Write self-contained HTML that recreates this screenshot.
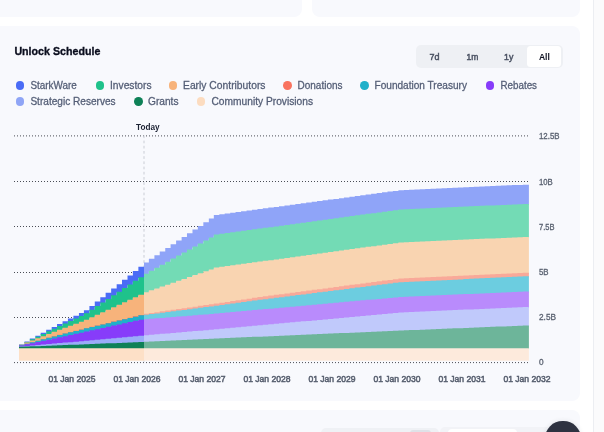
<!DOCTYPE html>
<html lang="en">
<head>
<meta charset="utf-8">
<title>Unlock Schedule</title>
<style>
html,body{margin:0;padding:0;}
body{width:604px;height:432px;overflow:hidden;background:#ffffff;position:relative;
font-family:"Liberation Sans",sans-serif;}
.card{position:absolute;background:#f8f9fd;}
#c1{left:0;top:-20px;width:301.5px;height:36.5px;border-radius:0 0 8px 0;}
#c2{left:311.5px;top:-20px;width:268.5px;height:36.5px;border-radius:0 0 8px 8px;}
#main{left:0;top:25.8px;width:580px;height:375.4px;border-radius:0 8px 8px 0;}
#c4{left:0;top:410px;width:580px;height:40px;border-radius:0 8px 0 0;}
#rail{position:absolute;left:593px;top:0;width:11px;height:432px;background:#fbfbfc;border-left:1px solid #eceef2;box-sizing:border-box;}
#seg{position:absolute;left:416px;top:44.6px;width:146.6px;height:23.1px;background:#eef0f4;border-radius:5px;}
#segon{position:absolute;left:526.7px;top:45.8px;width:34.8px;height:21.4px;background:#ffffff;border-radius:3.5px;}
.dot{position:absolute;width:8.8px;height:8.8px;border-radius:50%;display:block;}
#chart{position:absolute;left:0;top:0;will-change:transform;}
#fab{position:absolute;left:545.2px;top:420.9px;width:35.4px;height:35.4px;border-radius:50%;background:#2e3241;box-shadow:0 0 5px rgba(40,45,60,0.10);}
#b0{position:absolute;left:440px;top:427.3px;width:122px;height:10px;background:#f2f3f7;border-radius:5px 5px 0 0;}
#b1{position:absolute;left:320.5px;top:428.3px;width:118px;height:10px;background:#eff1f5;border-radius:5px 5px 0 0;}
#b1k{position:absolute;left:410px;top:430.4px;width:21px;height:6px;background:#dfe2e8;border-radius:3px 3px 0 0;}
#b2{position:absolute;left:448px;top:429.2px;width:68.8px;height:10px;background:#ffffff;border-radius:4px 4px 0 0;}
</style>
</head>
<body>
<div class="card" id="c1"></div>
<div class="card" id="c2"></div>
<div class="card" id="main"></div>
<div class="card" id="c4"></div>
<div id="rail"></div>
<div id="seg"></div><div id="segon"></div>
<div id="b0"></div><div id="b1"></div><div id="b1k"></div><div id="b2"></div>
<svg id="chart" width="604" height="432" viewBox="0 0 604 432">
<line x1="14" x2="529" y1="135.9" y2="135.9" stroke="#4a4d55" stroke-width="1" stroke-dasharray="1 2"/>
<line x1="14" x2="529" y1="181.5" y2="181.5" stroke="#4a4d55" stroke-width="1" stroke-dasharray="1 2"/>
<line x1="14" x2="529" y1="226.5" y2="226.5" stroke="#4a4d55" stroke-width="1" stroke-dasharray="1 2"/>
<line x1="14" x2="529" y1="272.5" y2="272.5" stroke="#4a4d55" stroke-width="1" stroke-dasharray="1 2"/>
<line x1="14" x2="529" y1="317.5" y2="317.5" stroke="#4a4d55" stroke-width="1" stroke-dasharray="1 2"/>
<line x1="14" x2="529" y1="362.6" y2="362.6" stroke="#4a4d55" stroke-width="1" stroke-dasharray="1 2"/>
<line x1="144.0" x2="144.0" y1="135.4" y2="362" stroke="#cacdd5" stroke-width="1" stroke-dasharray="2.7 2.5"/>
<path d="M19.00 344.40 L24.48 344.40 L24.48 341.49 L29.82 341.49 L29.82 338.59 L35.34 338.59 L35.34 335.68 L40.68 335.68 L40.68 332.77 L46.20 332.77 L46.20 329.86 L51.71 329.86 L51.71 326.96 L57.05 326.96 L57.05 324.05 L62.57 324.05 L62.57 321.29 L67.91 321.29 L67.91 318.53 L73.42 318.53 L73.42 315.78 L78.94 315.78 L78.94 313.02 L83.92 313.02 L83.92 310.26 L89.44 310.26 L89.44 305.89 L94.78 305.89 L94.78 301.54 L100.30 301.54 L100.30 297.19 L105.63 297.19 L105.63 292.83 L111.15 292.83 L111.15 288.48 L116.67 288.48 L116.67 284.13 L122.01 284.13 L122.01 279.77 L127.52 279.77 L127.52 275.42 L132.86 275.42 L132.86 271.07 L138.38 271.07 L138.38 266.72 L144.00 266.72 L144.00 278.12 L138.38 278.12 L138.38 281.73 L132.86 281.73 L132.86 285.34 L127.52 285.34 L127.52 288.95 L122.01 288.95 L122.01 292.57 L116.67 292.57 L116.67 296.18 L111.15 296.18 L111.15 299.79 L105.63 299.79 L105.63 303.41 L100.30 303.41 L100.30 307.02 L94.78 307.02 L94.78 310.63 L89.44 310.63 L89.44 314.26 L83.92 314.26 L83.92 316.79 L78.94 316.79 L78.94 319.31 L73.42 319.31 L73.42 321.83 L67.91 321.83 L67.91 324.36 L62.57 324.36 L62.57 326.88 L57.05 326.88 L57.05 329.56 L51.71 329.56 L51.71 332.23 L46.20 332.23 L46.20 334.90 L40.68 334.90 L40.68 337.58 L35.34 337.58 L35.34 340.25 L29.82 340.25 L29.82 342.93 L24.48 342.93 L24.48 345.60 L19.00 345.60Z" fill="#4a6cf6"/>
<path d="M144.00 262.53 L148.88 262.53 L148.88 258.87 L154.40 258.87 L154.40 255.21 L159.73 255.21 L159.73 251.54 L165.25 251.54 L165.25 247.88 L170.59 247.88 L170.59 244.21 L176.11 244.21 L176.11 240.55 L181.62 240.55 L181.62 236.88 L186.96 236.88 L186.96 233.22 L192.48 233.22 L192.48 229.56 L197.82 229.56 L197.82 225.89 L203.33 225.89 L203.33 222.23 L208.85 222.23 L208.85 218.56 L213.83 218.56 L213.83 214.90 L219.35 214.90 L219.35 214.17 L224.69 214.17 L224.69 213.44 L230.21 213.44 L230.21 212.72 L235.55 212.72 L235.55 211.99 L241.06 211.99 L241.06 211.26 L246.58 211.26 L246.58 210.53 L251.92 210.53 L251.92 209.80 L257.43 209.80 L257.43 209.08 L262.77 209.08 L262.77 208.35 L268.29 208.35 L268.29 207.62 L273.81 207.62 L273.81 206.89 L278.97 206.89 L278.97 206.16 L284.48 206.16 L284.48 205.44 L289.82 205.44 L289.82 204.71 L295.34 204.71 L295.34 203.98 L300.68 203.98 L300.68 203.25 L306.20 203.25 L306.20 202.53 L311.71 202.53 L311.71 201.80 L317.05 201.80 L317.05 201.07 L322.57 201.07 L322.57 200.34 L327.91 200.34 L327.91 199.61 L333.42 199.61 L333.42 198.89 L338.94 198.89 L338.94 198.16 L343.92 198.16 L343.92 197.43 L349.44 197.43 L349.44 196.70 L354.78 196.70 L354.78 195.97 L360.30 195.97 L360.30 195.25 L365.63 195.25 L365.63 194.52 L371.15 194.52 L371.15 193.79 L376.67 193.79 L376.67 193.06 L382.01 193.06 L382.01 192.33 L387.52 192.33 L387.52 191.61 L392.86 191.61 L392.86 190.88 L398.38 190.88 L398.38 190.15 L403.90 190.15 L403.90 189.91 L408.88 189.91 L408.88 189.67 L414.40 189.67 L414.40 189.43 L419.73 189.43 L419.73 189.19 L425.25 189.19 L425.25 188.95 L430.59 188.95 L430.59 188.71 L436.11 188.71 L436.11 188.47 L441.62 188.47 L441.62 188.23 L446.96 188.23 L446.96 187.99 L452.48 187.99 L452.48 187.75 L457.82 187.75 L457.82 187.51 L463.33 187.51 L463.33 187.28 L468.85 187.28 L468.85 187.04 L473.83 187.04 L473.83 186.80 L479.35 186.80 L479.35 186.56 L484.69 186.56 L484.69 186.32 L490.21 186.32 L490.21 186.08 L495.55 186.08 L495.55 185.84 L501.06 185.84 L501.06 185.60 L506.58 185.60 L506.58 185.36 L511.92 185.36 L511.92 185.12 L517.43 185.12 L517.43 184.88 L522.77 184.88 L522.77 184.64 L528.90 184.64 L528.90 204.84 L522.77 204.84 L522.77 205.08 L517.43 205.08 L517.43 205.32 L511.92 205.32 L511.92 205.56 L506.58 205.56 L506.58 205.80 L501.06 205.80 L501.06 206.04 L495.55 206.04 L495.55 206.28 L490.21 206.28 L490.21 206.52 L484.69 206.52 L484.69 206.76 L479.35 206.76 L479.35 207.00 L473.83 207.00 L473.83 207.24 L468.85 207.24 L468.85 207.48 L463.33 207.48 L463.33 207.71 L457.82 207.71 L457.82 207.95 L452.48 207.95 L452.48 208.19 L446.96 208.19 L446.96 208.43 L441.62 208.43 L441.62 208.67 L436.11 208.67 L436.11 208.91 L430.59 208.91 L430.59 209.15 L425.25 209.15 L425.25 209.39 L419.73 209.39 L419.73 209.63 L414.40 209.63 L414.40 209.87 L408.88 209.87 L408.88 210.11 L403.90 210.11 L403.90 210.35 L398.38 210.35 L398.38 211.09 L392.86 211.09 L392.86 211.82 L387.52 211.82 L387.52 212.56 L382.01 212.56 L382.01 213.30 L376.67 213.30 L376.67 214.03 L371.15 214.03 L371.15 214.77 L365.63 214.77 L365.63 215.51 L360.30 215.51 L360.30 216.24 L354.78 216.24 L354.78 216.98 L349.44 216.98 L349.44 217.72 L343.92 217.72 L343.92 218.45 L338.94 218.45 L338.94 219.19 L333.42 219.19 L333.42 219.93 L327.91 219.93 L327.91 220.66 L322.57 220.66 L322.57 221.40 L317.05 221.40 L317.05 222.14 L311.71 222.14 L311.71 222.88 L306.20 222.88 L306.20 223.61 L300.68 223.61 L300.68 224.35 L295.34 224.35 L295.34 225.09 L289.82 225.09 L289.82 225.82 L284.48 225.82 L284.48 226.56 L278.97 226.56 L278.97 227.30 L273.81 227.30 L273.81 228.03 L268.29 228.03 L268.29 228.77 L262.77 228.77 L262.77 229.51 L257.43 229.51 L257.43 230.24 L251.92 230.24 L251.92 230.98 L246.58 230.98 L246.58 231.72 L241.06 231.72 L241.06 232.45 L235.55 232.45 L235.55 233.19 L230.21 233.19 L230.21 233.93 L224.69 233.93 L224.69 234.66 L219.35 234.66 L219.35 235.40 L213.83 235.40 L213.83 238.41 L208.85 238.41 L208.85 241.43 L203.33 241.43 L203.33 244.44 L197.82 244.44 L197.82 247.46 L192.48 247.46 L192.48 250.47 L186.96 250.47 L186.96 253.48 L181.62 253.48 L181.62 256.50 L176.11 256.50 L176.11 259.51 L170.59 259.51 L170.59 262.53 L165.25 262.53 L165.25 265.54 L159.73 265.54 L159.73 268.56 L154.40 268.56 L154.40 271.57 L148.88 271.57 L148.88 274.58 L144.00 274.58Z" fill="#8fa4f8"/>
<path d="M19.00 344.70 L24.48 344.70 L24.48 342.03 L29.82 342.03 L29.82 339.35 L35.34 339.35 L35.34 336.68 L40.68 336.68 L40.68 334.00 L46.20 334.00 L46.20 331.33 L51.71 331.33 L51.71 328.66 L57.05 328.66 L57.05 325.98 L62.57 325.98 L62.57 323.46 L67.91 323.46 L67.91 320.93 L73.42 320.93 L73.42 318.41 L78.94 318.41 L78.94 315.89 L83.92 315.89 L83.92 313.36 L89.44 313.36 L89.44 309.73 L94.78 309.73 L94.78 306.12 L100.30 306.12 L100.30 302.51 L105.63 302.51 L105.63 298.89 L111.15 298.89 L111.15 295.28 L116.67 295.28 L116.67 291.67 L122.01 291.67 L122.01 288.05 L127.52 288.05 L127.52 284.44 L132.86 284.44 L132.86 280.83 L138.38 280.83 L138.38 277.22 L144.00 277.22 L144.00 295.60 L138.38 295.60 L138.38 298.10 L132.86 298.10 L132.86 300.61 L127.52 300.61 L127.52 303.11 L122.01 303.11 L122.01 305.62 L116.67 305.62 L116.67 308.12 L111.15 308.12 L111.15 310.63 L105.63 310.63 L105.63 313.13 L100.30 313.13 L100.30 315.64 L94.78 315.64 L94.78 318.14 L89.44 318.14 L89.44 320.66 L83.92 320.66 L83.92 322.65 L78.94 322.65 L78.94 324.64 L73.42 324.64 L73.42 326.63 L67.91 326.63 L67.91 328.62 L62.57 328.62 L62.57 330.62 L57.05 330.62 L57.05 332.76 L51.71 332.76 L51.71 334.90 L46.20 334.90 L46.20 337.04 L40.68 337.04 L40.68 339.18 L35.34 339.18 L35.34 341.32 L29.82 341.32 L29.82 343.46 L24.48 343.46 L24.48 345.60 L19.00 345.60Z" fill="#1fc28b"/>
<path d="M144.00 273.68 L148.88 273.68 L148.88 270.67 L154.40 270.67 L154.40 267.66 L159.73 267.66 L159.73 264.64 L165.25 264.64 L165.25 261.63 L170.59 261.63 L170.59 258.61 L176.11 258.61 L176.11 255.60 L181.62 255.60 L181.62 252.58 L186.96 252.58 L186.96 249.57 L192.48 249.57 L192.48 246.56 L197.82 246.56 L197.82 243.54 L203.33 243.54 L203.33 240.53 L208.85 240.53 L208.85 237.51 L213.83 237.51 L213.83 234.50 L219.35 234.50 L219.35 233.76 L224.69 233.76 L224.69 233.03 L230.21 233.03 L230.21 232.29 L235.55 232.29 L235.55 231.55 L241.06 231.55 L241.06 230.82 L246.58 230.82 L246.58 230.08 L251.92 230.08 L251.92 229.34 L257.43 229.34 L257.43 228.61 L262.77 228.61 L262.77 227.87 L268.29 227.87 L268.29 227.13 L273.81 227.13 L273.81 226.40 L278.97 226.40 L278.97 225.66 L284.48 225.66 L284.48 224.92 L289.82 224.92 L289.82 224.19 L295.34 224.19 L295.34 223.45 L300.68 223.45 L300.68 222.71 L306.20 222.71 L306.20 221.98 L311.71 221.98 L311.71 221.24 L317.05 221.24 L317.05 220.50 L322.57 220.50 L322.57 219.76 L327.91 219.76 L327.91 219.03 L333.42 219.03 L333.42 218.29 L338.94 218.29 L338.94 217.55 L343.92 217.55 L343.92 216.82 L349.44 216.82 L349.44 216.08 L354.78 216.08 L354.78 215.34 L360.30 215.34 L360.30 214.61 L365.63 214.61 L365.63 213.87 L371.15 213.87 L371.15 213.13 L376.67 213.13 L376.67 212.40 L382.01 212.40 L382.01 211.66 L387.52 211.66 L387.52 210.92 L392.86 210.92 L392.86 210.19 L398.38 210.19 L398.38 209.45 L403.90 209.45 L403.90 209.21 L408.88 209.21 L408.88 208.97 L414.40 208.97 L414.40 208.73 L419.73 208.73 L419.73 208.49 L425.25 208.49 L425.25 208.25 L430.59 208.25 L430.59 208.01 L436.11 208.01 L436.11 207.77 L441.62 207.77 L441.62 207.53 L446.96 207.53 L446.96 207.29 L452.48 207.29 L452.48 207.05 L457.82 207.05 L457.82 206.81 L463.33 206.81 L463.33 206.58 L468.85 206.58 L468.85 206.34 L473.83 206.34 L473.83 206.10 L479.35 206.10 L479.35 205.86 L484.69 205.86 L484.69 205.62 L490.21 205.62 L490.21 205.38 L495.55 205.38 L495.55 205.14 L501.06 205.14 L501.06 204.90 L506.58 204.90 L506.58 204.66 L511.92 204.66 L511.92 204.42 L517.43 204.42 L517.43 204.18 L522.77 204.18 L522.77 203.94 L528.90 203.94 L528.90 237.84 L522.77 237.84 L522.77 238.08 L517.43 238.08 L517.43 238.32 L511.92 238.32 L511.92 238.56 L506.58 238.56 L506.58 238.80 L501.06 238.80 L501.06 239.04 L495.55 239.04 L495.55 239.28 L490.21 239.28 L490.21 239.52 L484.69 239.52 L484.69 239.76 L479.35 239.76 L479.35 240.00 L473.83 240.00 L473.83 240.24 L468.85 240.24 L468.85 240.48 L463.33 240.48 L463.33 240.71 L457.82 240.71 L457.82 240.95 L452.48 240.95 L452.48 241.19 L446.96 241.19 L446.96 241.43 L441.62 241.43 L441.62 241.67 L436.11 241.67 L436.11 241.91 L430.59 241.91 L430.59 242.15 L425.25 242.15 L425.25 242.39 L419.73 242.39 L419.73 242.63 L414.40 242.63 L414.40 242.87 L408.88 242.87 L408.88 243.11 L403.90 243.11 L403.90 243.35 L398.38 243.35 L398.38 244.09 L392.86 244.09 L392.86 244.82 L387.52 244.82 L387.52 245.56 L382.01 245.56 L382.01 246.30 L376.67 246.30 L376.67 247.03 L371.15 247.03 L371.15 247.77 L365.63 247.77 L365.63 248.51 L360.30 248.51 L360.30 249.24 L354.78 249.24 L354.78 249.98 L349.44 249.98 L349.44 250.72 L343.92 250.72 L343.92 251.45 L338.94 251.45 L338.94 252.19 L333.42 252.19 L333.42 252.93 L327.91 252.93 L327.91 253.66 L322.57 253.66 L322.57 254.40 L317.05 254.40 L317.05 255.14 L311.71 255.14 L311.71 255.88 L306.20 255.88 L306.20 256.61 L300.68 256.61 L300.68 257.35 L295.34 257.35 L295.34 258.09 L289.82 258.09 L289.82 258.82 L284.48 258.82 L284.48 259.56 L278.97 259.56 L278.97 260.30 L273.81 260.30 L273.81 261.03 L268.29 261.03 L268.29 261.77 L262.77 261.77 L262.77 262.51 L257.43 262.51 L257.43 263.24 L251.92 263.24 L251.92 263.98 L246.58 263.98 L246.58 264.72 L241.06 264.72 L241.06 265.45 L235.55 265.45 L235.55 266.19 L230.21 266.19 L230.21 266.93 L224.69 266.93 L224.69 267.66 L219.35 267.66 L219.35 268.40 L213.83 268.40 L213.83 270.31 L208.85 270.31 L208.85 272.21 L203.33 272.21 L203.33 274.12 L197.82 274.12 L197.82 276.02 L192.48 276.02 L192.48 277.93 L186.96 277.93 L186.96 279.83 L181.62 279.83 L181.62 281.74 L176.11 281.74 L176.11 283.65 L170.59 283.65 L170.59 285.55 L165.25 285.55 L165.25 287.46 L159.73 287.46 L159.73 289.36 L154.40 289.36 L154.40 291.27 L148.88 291.27 L148.88 293.17 L144.00 293.17Z" fill="#73dbb5"/>
<path d="M19.00 344.70 L24.48 344.70 L24.48 342.56 L29.82 342.56 L29.82 340.42 L35.34 340.42 L35.34 338.28 L40.68 338.28 L40.68 336.14 L46.20 336.14 L46.20 334.00 L51.71 334.00 L51.71 331.86 L57.05 331.86 L57.05 329.72 L62.57 329.72 L62.57 327.72 L67.91 327.72 L67.91 325.73 L73.42 325.73 L73.42 323.74 L78.94 323.74 L78.94 321.75 L83.92 321.75 L83.92 319.76 L89.44 319.76 L89.44 317.24 L94.78 317.24 L94.78 314.74 L100.30 314.74 L100.30 312.23 L105.63 312.23 L105.63 309.73 L111.15 309.73 L111.15 307.22 L116.67 307.22 L116.67 304.72 L122.01 304.72 L122.01 302.21 L127.52 302.21 L127.52 299.71 L132.86 299.71 L132.86 297.20 L138.38 297.20 L138.38 294.70 L144.00 294.70 L144.00 315.90 L138.38 315.90 L138.38 317.21 L132.86 317.21 L132.86 318.53 L127.52 318.53 L127.52 319.84 L122.01 319.84 L122.01 321.16 L116.67 321.16 L116.67 322.47 L111.15 322.47 L111.15 323.79 L105.63 323.79 L105.63 325.10 L100.30 325.10 L100.30 326.42 L94.78 326.42 L94.78 327.73 L89.44 327.73 L89.44 329.06 L83.92 329.06 L83.92 330.39 L78.94 330.39 L78.94 331.73 L73.42 331.73 L73.42 333.06 L67.91 333.06 L67.91 334.39 L62.57 334.39 L62.57 335.72 L57.05 335.72 L57.05 337.21 L51.71 337.21 L51.71 338.69 L46.20 338.69 L46.20 340.17 L40.68 340.17 L40.68 341.65 L35.34 341.65 L35.34 343.14 L29.82 343.14 L29.82 344.62 L24.48 344.62 L24.48 346.10 L19.00 346.10Z" fill="#f7b37b"/>
<path d="M144.00 292.27 L148.88 292.27 L148.88 290.37 L154.40 290.37 L154.40 288.46 L159.73 288.46 L159.73 286.56 L165.25 286.56 L165.25 284.65 L170.59 284.65 L170.59 282.75 L176.11 282.75 L176.11 280.84 L181.62 280.84 L181.62 278.93 L186.96 278.93 L186.96 277.03 L192.48 277.03 L192.48 275.12 L197.82 275.12 L197.82 273.22 L203.33 273.22 L203.33 271.31 L208.85 271.31 L208.85 269.41 L213.83 269.41 L213.83 267.50 L219.35 267.50 L219.35 266.76 L224.69 266.76 L224.69 266.03 L230.21 266.03 L230.21 265.29 L235.55 265.29 L235.55 264.55 L241.06 264.55 L241.06 263.82 L246.58 263.82 L246.58 263.08 L251.92 263.08 L251.92 262.34 L257.43 262.34 L257.43 261.61 L262.77 261.61 L262.77 260.87 L268.29 260.87 L268.29 260.13 L273.81 260.13 L273.81 259.40 L278.97 259.40 L278.97 258.66 L284.48 258.66 L284.48 257.92 L289.82 257.92 L289.82 257.19 L295.34 257.19 L295.34 256.45 L300.68 256.45 L300.68 255.71 L306.20 255.71 L306.20 254.98 L311.71 254.98 L311.71 254.24 L317.05 254.24 L317.05 253.50 L322.57 253.50 L322.57 252.76 L327.91 252.76 L327.91 252.03 L333.42 252.03 L333.42 251.29 L338.94 251.29 L338.94 250.55 L343.92 250.55 L343.92 249.82 L349.44 249.82 L349.44 249.08 L354.78 249.08 L354.78 248.34 L360.30 248.34 L360.30 247.61 L365.63 247.61 L365.63 246.87 L371.15 246.87 L371.15 246.13 L376.67 246.13 L376.67 245.40 L382.01 245.40 L382.01 244.66 L387.52 244.66 L387.52 243.92 L392.86 243.92 L392.86 243.19 L398.38 243.19 L398.38 242.45 L403.90 242.45 L403.90 242.21 L408.88 242.21 L408.88 241.97 L414.40 241.97 L414.40 241.73 L419.73 241.73 L419.73 241.49 L425.25 241.49 L425.25 241.25 L430.59 241.25 L430.59 241.01 L436.11 241.01 L436.11 240.77 L441.62 240.77 L441.62 240.53 L446.96 240.53 L446.96 240.29 L452.48 240.29 L452.48 240.05 L457.82 240.05 L457.82 239.81 L463.33 239.81 L463.33 239.58 L468.85 239.58 L468.85 239.34 L473.83 239.34 L473.83 239.10 L479.35 239.10 L479.35 238.86 L484.69 238.86 L484.69 238.62 L490.21 238.62 L490.21 238.38 L495.55 238.38 L495.55 238.14 L501.06 238.14 L501.06 237.90 L506.58 237.90 L506.58 237.66 L511.92 237.66 L511.92 237.42 L517.43 237.42 L517.43 237.18 L522.77 237.18 L522.77 236.94 L528.90 236.94 L528.90 273.74 L522.77 273.74 L522.77 273.99 L517.43 273.99 L517.43 274.23 L511.92 274.23 L511.92 274.48 L506.58 274.48 L506.58 274.72 L501.06 274.72 L501.06 274.96 L495.55 274.96 L495.55 275.21 L490.21 275.21 L490.21 275.45 L484.69 275.45 L484.69 275.69 L479.35 275.69 L479.35 275.94 L473.83 275.94 L473.83 276.18 L468.85 276.18 L468.85 276.43 L463.33 276.43 L463.33 276.67 L457.82 276.67 L457.82 276.91 L452.48 276.91 L452.48 277.16 L446.96 277.16 L446.96 277.40 L441.62 277.40 L441.62 277.64 L436.11 277.64 L436.11 277.89 L430.59 277.89 L430.59 278.13 L425.25 278.13 L425.25 278.38 L419.73 278.38 L419.73 278.62 L414.40 278.62 L414.40 278.86 L408.88 278.86 L408.88 279.11 L403.90 279.11 L403.90 279.35 L398.38 279.35 L398.38 280.06 L392.86 280.06 L392.86 280.78 L387.52 280.78 L387.52 281.49 L382.01 281.49 L382.01 282.20 L376.67 282.20 L376.67 282.92 L371.15 282.92 L371.15 283.63 L365.63 283.63 L365.63 284.35 L360.30 284.35 L360.30 285.06 L354.78 285.06 L354.78 285.77 L349.44 285.77 L349.44 286.49 L343.92 286.49 L343.92 287.20 L338.94 287.20 L338.94 287.91 L333.42 287.91 L333.42 288.63 L327.91 288.63 L327.91 289.34 L322.57 289.34 L322.57 290.06 L317.05 290.06 L317.05 290.77 L311.71 290.77 L311.71 291.48 L306.20 291.48 L306.20 292.20 L300.68 292.20 L300.68 292.91 L295.34 292.91 L295.34 293.62 L289.82 293.62 L289.82 294.34 L284.48 294.34 L284.48 295.05 L278.97 295.05 L278.97 295.76 L273.81 295.76 L273.81 296.48 L268.29 296.48 L268.29 297.19 L262.77 297.19 L262.77 297.91 L257.43 297.91 L257.43 298.72 L251.92 298.72 L251.92 299.53 L246.58 299.53 L246.58 300.34 L241.06 300.34 L241.06 301.15 L235.55 301.15 L235.55 301.96 L230.21 301.96 L230.21 302.78 L224.69 302.78 L224.69 303.59 L219.35 303.59 L219.35 304.40 L213.83 304.40 L213.83 305.18 L208.85 305.18 L208.85 305.97 L203.33 305.97 L203.33 306.75 L197.82 306.75 L197.82 307.54 L192.48 307.54 L192.48 308.32 L186.96 308.32 L186.96 309.11 L181.62 309.11 L181.62 309.89 L176.11 309.89 L176.11 310.67 L170.59 310.67 L170.59 311.46 L165.25 311.46 L165.25 312.24 L159.73 312.24 L159.73 313.03 L154.40 313.03 L154.40 313.81 L148.88 313.81 L148.88 314.60 L144.00 314.60Z" fill="#f9d4b1"/>
<path d="M19.00 345.20 L24.48 345.20 L24.48 343.72 L29.82 343.72 L29.82 342.24 L35.34 342.24 L35.34 340.75 L40.68 340.75 L40.68 339.27 L46.20 339.27 L46.20 337.79 L51.71 337.79 L51.71 336.31 L57.05 336.31 L57.05 334.82 L62.57 334.82 L62.57 333.49 L67.91 333.49 L67.91 332.16 L73.42 332.16 L73.42 330.83 L78.94 330.83 L78.94 329.49 L83.92 329.49 L83.92 328.16 L89.44 328.16 L89.44 326.83 L94.78 326.83 L94.78 325.52 L100.30 325.52 L100.30 324.20 L105.63 324.20 L105.63 322.89 L111.15 322.89 L111.15 321.57 L116.67 321.57 L116.67 320.26 L122.01 320.26 L122.01 318.94 L127.52 318.94 L127.52 317.63 L132.86 317.63 L132.86 316.31 L138.38 316.31 L138.38 315.00 L144.00 315.00 L144.00 316.25 L138.38 316.25 L138.38 317.55 L132.86 317.55 L132.86 318.85 L127.52 318.85 L127.52 320.15 L122.01 320.15 L122.01 321.44 L116.67 321.44 L116.67 322.74 L111.15 322.74 L111.15 324.04 L105.63 324.04 L105.63 325.34 L100.30 325.34 L100.30 326.64 L94.78 326.64 L94.78 327.94 L89.44 327.94 L89.44 329.25 L83.92 329.25 L83.92 330.57 L78.94 330.57 L78.94 331.89 L73.42 331.89 L73.42 333.20 L67.91 333.20 L67.91 334.52 L62.57 334.52 L62.57 335.83 L57.05 335.83 L57.05 337.30 L51.71 337.30 L51.71 338.77 L46.20 338.77 L46.20 340.23 L40.68 340.23 L40.68 341.70 L35.34 341.70 L35.34 343.17 L29.82 343.17 L29.82 344.63 L24.48 344.63 L24.48 346.10 L19.00 346.10Z" fill="#f9735f"/>
<path d="M144.00 313.70 L148.88 313.70 L148.88 312.91 L154.40 312.91 L154.40 312.13 L159.73 312.13 L159.73 311.34 L165.25 311.34 L165.25 310.56 L170.59 310.56 L170.59 309.77 L176.11 309.77 L176.11 308.99 L181.62 308.99 L181.62 308.21 L186.96 308.21 L186.96 307.42 L192.48 307.42 L192.48 306.64 L197.82 306.64 L197.82 305.85 L203.33 305.85 L203.33 305.07 L208.85 305.07 L208.85 304.28 L213.83 304.28 L213.83 303.50 L219.35 303.50 L219.35 302.69 L224.69 302.69 L224.69 301.88 L230.21 301.88 L230.21 301.06 L235.55 301.06 L235.55 300.25 L241.06 300.25 L241.06 299.44 L246.58 299.44 L246.58 298.63 L251.92 298.63 L251.92 297.82 L257.43 297.82 L257.43 297.01 L262.77 297.01 L262.77 296.29 L268.29 296.29 L268.29 295.58 L273.81 295.58 L273.81 294.86 L278.97 294.86 L278.97 294.15 L284.48 294.15 L284.48 293.44 L289.82 293.44 L289.82 292.72 L295.34 292.72 L295.34 292.01 L300.68 292.01 L300.68 291.30 L306.20 291.30 L306.20 290.58 L311.71 290.58 L311.71 289.87 L317.05 289.87 L317.05 289.16 L322.57 289.16 L322.57 288.44 L327.91 288.44 L327.91 287.73 L333.42 287.73 L333.42 287.01 L338.94 287.01 L338.94 286.30 L343.92 286.30 L343.92 285.59 L349.44 285.59 L349.44 284.87 L354.78 284.87 L354.78 284.16 L360.30 284.16 L360.30 283.45 L365.63 283.45 L365.63 282.73 L371.15 282.73 L371.15 282.02 L376.67 282.02 L376.67 281.30 L382.01 281.30 L382.01 280.59 L387.52 280.59 L387.52 279.88 L392.86 279.88 L392.86 279.16 L398.38 279.16 L398.38 278.45 L403.90 278.45 L403.90 278.21 L408.88 278.21 L408.88 277.96 L414.40 277.96 L414.40 277.72 L419.73 277.72 L419.73 277.48 L425.25 277.48 L425.25 277.23 L430.59 277.23 L430.59 276.99 L436.11 276.99 L436.11 276.74 L441.62 276.74 L441.62 276.50 L446.96 276.50 L446.96 276.26 L452.48 276.26 L452.48 276.01 L457.82 276.01 L457.82 275.77 L463.33 275.77 L463.33 275.53 L468.85 275.53 L468.85 275.28 L473.83 275.28 L473.83 275.04 L479.35 275.04 L479.35 274.79 L484.69 274.79 L484.69 274.55 L490.21 274.55 L490.21 274.31 L495.55 274.31 L495.55 274.06 L501.06 274.06 L501.06 273.82 L506.58 273.82 L506.58 273.58 L511.92 273.58 L511.92 273.33 L517.43 273.33 L517.43 273.09 L522.77 273.09 L522.77 272.84 L528.90 272.84 L528.90 277.25 L522.77 277.25 L522.77 277.50 L517.43 277.50 L517.43 277.76 L511.92 277.76 L511.92 278.01 L506.58 278.01 L506.58 278.26 L501.06 278.26 L501.06 278.51 L495.55 278.51 L495.55 278.76 L490.21 278.76 L490.21 279.02 L484.69 279.02 L484.69 279.27 L479.35 279.27 L479.35 279.52 L473.83 279.52 L473.83 279.77 L468.85 279.77 L468.85 280.02 L463.33 280.02 L463.33 280.28 L457.82 280.28 L457.82 280.53 L452.48 280.53 L452.48 280.78 L446.96 280.78 L446.96 281.03 L441.62 281.03 L441.62 281.29 L436.11 281.29 L436.11 281.54 L430.59 281.54 L430.59 281.79 L425.25 281.79 L425.25 282.04 L419.73 282.04 L419.73 282.29 L414.40 282.29 L414.40 282.55 L408.88 282.55 L408.88 282.80 L403.90 282.80 L403.90 283.05 L398.38 283.05 L398.38 283.73 L392.86 283.73 L392.86 284.41 L387.52 284.41 L387.52 285.09 L382.01 285.09 L382.01 285.77 L376.67 285.77 L376.67 286.45 L371.15 286.45 L371.15 287.14 L365.63 287.14 L365.63 287.82 L360.30 287.82 L360.30 288.50 L354.78 288.50 L354.78 289.18 L349.44 289.18 L349.44 289.86 L343.92 289.86 L343.92 290.54 L338.94 290.54 L338.94 291.22 L333.42 291.22 L333.42 291.90 L327.91 291.90 L327.91 292.58 L322.57 292.58 L322.57 293.26 L317.05 293.26 L317.05 293.95 L311.71 293.95 L311.71 294.63 L306.20 294.63 L306.20 295.31 L300.68 295.31 L300.68 295.99 L295.34 295.99 L295.34 296.67 L289.82 296.67 L289.82 297.35 L284.48 297.35 L284.48 298.03 L278.97 298.03 L278.97 298.71 L273.81 298.71 L273.81 299.39 L268.29 299.39 L268.29 300.07 L262.77 300.07 L262.77 300.76 L257.43 300.76 L257.43 301.49 L251.92 301.49 L251.92 302.22 L246.58 302.22 L246.58 302.95 L241.06 302.95 L241.06 303.68 L235.55 303.68 L235.55 304.41 L230.21 304.41 L230.21 305.14 L224.69 305.14 L224.69 305.87 L219.35 305.87 L219.35 306.60 L213.83 306.60 L213.83 307.30 L208.85 307.30 L208.85 308.00 L203.33 308.00 L203.33 308.70 L197.82 308.70 L197.82 309.40 L192.48 309.40 L192.48 310.10 L186.96 310.10 L186.96 310.80 L181.62 310.80 L181.62 311.50 L176.11 311.50 L176.11 312.20 L170.59 312.20 L170.59 312.90 L165.25 312.90 L165.25 313.60 L159.73 313.60 L159.73 314.30 L154.40 314.30 L154.40 315.00 L148.88 315.00 L148.88 315.70 L144.00 315.70Z" fill="#f9a999"/>
<path d="M19.00 345.20 L24.48 345.20 L24.48 343.73 L29.82 343.73 L29.82 342.27 L35.34 342.27 L35.34 340.80 L40.68 340.80 L40.68 339.33 L46.20 339.33 L46.20 337.87 L51.71 337.87 L51.71 336.40 L57.05 336.40 L57.05 334.93 L62.57 334.93 L62.57 333.62 L67.91 333.62 L67.91 332.30 L73.42 332.30 L73.42 330.99 L78.94 330.99 L78.94 329.67 L83.92 329.67 L83.92 328.35 L89.44 328.35 L89.44 327.04 L94.78 327.04 L94.78 325.74 L100.30 325.74 L100.30 324.44 L105.63 324.44 L105.63 323.14 L111.15 323.14 L111.15 321.84 L116.67 321.84 L116.67 320.54 L122.01 320.54 L122.01 319.25 L127.52 319.25 L127.52 317.95 L132.86 317.95 L132.86 316.65 L138.38 316.65 L138.38 315.35 L144.00 315.35 L144.00 320.55 L138.38 320.55 L138.38 321.74 L132.86 321.74 L132.86 322.92 L127.52 322.92 L127.52 324.11 L122.01 324.11 L122.01 325.30 L116.67 325.30 L116.67 326.49 L111.15 326.49 L111.15 327.67 L105.63 327.67 L105.63 328.86 L100.30 328.86 L100.30 330.05 L94.78 330.05 L94.78 331.24 L89.44 331.24 L89.44 332.40 L83.92 332.40 L83.92 333.57 L78.94 333.57 L78.94 334.74 L73.42 334.74 L73.42 335.90 L67.91 335.90 L67.91 337.07 L62.57 337.07 L62.57 338.23 L57.05 338.23 L57.05 339.40 L51.71 339.40 L51.71 340.57 L46.20 340.57 L46.20 341.73 L40.68 341.73 L40.68 342.90 L35.34 342.90 L35.34 344.07 L29.82 344.07 L29.82 345.23 L24.48 345.23 L24.48 346.40 L19.00 346.40Z" fill="#1fb0ca"/>
<path d="M144.00 314.80 L148.88 314.80 L148.88 314.10 L154.40 314.10 L154.40 313.40 L159.73 313.40 L159.73 312.70 L165.25 312.70 L165.25 312.00 L170.59 312.00 L170.59 311.30 L176.11 311.30 L176.11 310.60 L181.62 310.60 L181.62 309.90 L186.96 309.90 L186.96 309.20 L192.48 309.20 L192.48 308.50 L197.82 308.50 L197.82 307.80 L203.33 307.80 L203.33 307.10 L208.85 307.10 L208.85 306.40 L213.83 306.40 L213.83 305.70 L219.35 305.70 L219.35 304.97 L224.69 304.97 L224.69 304.24 L230.21 304.24 L230.21 303.51 L235.55 303.51 L235.55 302.78 L241.06 302.78 L241.06 302.05 L246.58 302.05 L246.58 301.32 L251.92 301.32 L251.92 300.59 L257.43 300.59 L257.43 299.86 L262.77 299.86 L262.77 299.17 L268.29 299.17 L268.29 298.49 L273.81 298.49 L273.81 297.81 L278.97 297.81 L278.97 297.13 L284.48 297.13 L284.48 296.45 L289.82 296.45 L289.82 295.77 L295.34 295.77 L295.34 295.09 L300.68 295.09 L300.68 294.41 L306.20 294.41 L306.20 293.73 L311.71 293.73 L311.71 293.05 L317.05 293.05 L317.05 292.36 L322.57 292.36 L322.57 291.68 L327.91 291.68 L327.91 291.00 L333.42 291.00 L333.42 290.32 L338.94 290.32 L338.94 289.64 L343.92 289.64 L343.92 288.96 L349.44 288.96 L349.44 288.28 L354.78 288.28 L354.78 287.60 L360.30 287.60 L360.30 286.92 L365.63 286.92 L365.63 286.24 L371.15 286.24 L371.15 285.55 L376.67 285.55 L376.67 284.87 L382.01 284.87 L382.01 284.19 L387.52 284.19 L387.52 283.51 L392.86 283.51 L392.86 282.83 L398.38 282.83 L398.38 282.15 L403.90 282.15 L403.90 281.90 L408.88 281.90 L408.88 281.65 L414.40 281.65 L414.40 281.39 L419.73 281.39 L419.73 281.14 L425.25 281.14 L425.25 280.89 L430.59 280.89 L430.59 280.64 L436.11 280.64 L436.11 280.39 L441.62 280.39 L441.62 280.13 L446.96 280.13 L446.96 279.88 L452.48 279.88 L452.48 279.63 L457.82 279.63 L457.82 279.38 L463.33 279.38 L463.33 279.12 L468.85 279.12 L468.85 278.87 L473.83 278.87 L473.83 278.62 L479.35 278.62 L479.35 278.37 L484.69 278.37 L484.69 278.12 L490.21 278.12 L490.21 277.86 L495.55 277.86 L495.55 277.61 L501.06 277.61 L501.06 277.36 L506.58 277.36 L506.58 277.11 L511.92 277.11 L511.92 276.86 L517.43 276.86 L517.43 276.60 L522.77 276.60 L522.77 276.35 L528.90 276.35 L528.90 292.44 L522.77 292.44 L522.77 292.67 L517.43 292.67 L517.43 292.91 L511.92 292.91 L511.92 293.14 L506.58 293.14 L506.58 293.38 L501.06 293.38 L501.06 293.61 L495.55 293.61 L495.55 293.85 L490.21 293.85 L490.21 294.08 L484.69 294.08 L484.69 294.32 L479.35 294.32 L479.35 294.55 L473.83 294.55 L473.83 294.79 L468.85 294.79 L468.85 295.02 L463.33 295.02 L463.33 295.26 L457.82 295.26 L457.82 295.50 L452.48 295.50 L452.48 295.73 L446.96 295.73 L446.96 295.97 L441.62 295.97 L441.62 296.20 L436.11 296.20 L436.11 296.44 L430.59 296.44 L430.59 296.67 L425.25 296.67 L425.25 296.91 L419.73 296.91 L419.73 297.14 L414.40 297.14 L414.40 297.38 L408.88 297.38 L408.88 297.61 L403.90 297.61 L403.90 297.85 L398.38 297.85 L398.38 298.34 L392.86 298.34 L392.86 298.82 L387.52 298.82 L387.52 299.31 L382.01 299.31 L382.01 299.80 L376.67 299.80 L376.67 300.28 L371.15 300.28 L371.15 300.77 L365.63 300.77 L365.63 301.26 L360.30 301.26 L360.30 301.74 L354.78 301.74 L354.78 302.23 L349.44 302.23 L349.44 302.72 L343.92 302.72 L343.92 303.20 L338.94 303.20 L338.94 303.69 L333.42 303.69 L333.42 304.18 L327.91 304.18 L327.91 304.66 L322.57 304.66 L322.57 305.15 L317.05 305.15 L317.05 305.64 L311.71 305.64 L311.71 306.12 L306.20 306.12 L306.20 306.61 L300.68 306.61 L300.68 307.10 L295.34 307.10 L295.34 307.59 L289.82 307.59 L289.82 308.07 L284.48 308.07 L284.48 308.56 L278.97 308.56 L278.97 309.05 L273.81 309.05 L273.81 309.53 L268.29 309.53 L268.29 310.02 L262.77 310.02 L262.77 310.51 L257.43 310.51 L257.43 310.99 L251.92 310.99 L251.92 311.48 L246.58 311.48 L246.58 311.97 L241.06 311.97 L241.06 312.45 L235.55 312.45 L235.55 312.94 L230.21 312.94 L230.21 313.43 L224.69 313.43 L224.69 313.91 L219.35 313.91 L219.35 314.40 L213.83 314.40 L213.83 314.84 L208.85 314.84 L208.85 315.28 L203.33 315.28 L203.33 315.71 L197.82 315.71 L197.82 316.15 L192.48 316.15 L192.48 316.59 L186.96 316.59 L186.96 317.03 L181.62 317.03 L181.62 317.47 L176.11 317.47 L176.11 317.91 L170.59 317.91 L170.59 318.34 L165.25 318.34 L165.25 318.78 L159.73 318.78 L159.73 319.22 L154.40 319.22 L154.40 319.66 L148.88 319.66 L148.88 320.10 L144.00 320.10Z" fill="#6ccde0"/>
<path d="M19.00 345.50 L24.48 345.50 L24.48 344.33 L29.82 344.33 L29.82 343.17 L35.34 343.17 L35.34 342.00 L40.68 342.00 L40.68 340.83 L46.20 340.83 L46.20 339.67 L51.71 339.67 L51.71 338.50 L57.05 338.50 L57.05 337.33 L62.57 337.33 L62.57 336.17 L67.91 336.17 L67.91 335.00 L73.42 335.00 L73.42 333.84 L78.94 333.84 L78.94 332.67 L83.92 332.67 L83.92 331.50 L89.44 331.50 L89.44 330.34 L94.78 330.34 L94.78 329.15 L100.30 329.15 L100.30 327.96 L105.63 327.96 L105.63 326.77 L111.15 326.77 L111.15 325.59 L116.67 325.59 L116.67 324.40 L122.01 324.40 L122.01 323.21 L127.52 323.21 L127.52 322.02 L132.86 322.02 L132.86 320.84 L138.38 320.84 L138.38 319.65 L144.00 319.65 L144.00 336.55 L138.38 336.55 L138.38 337.06 L132.86 337.06 L132.86 337.56 L127.52 337.56 L127.52 338.07 L122.01 338.07 L122.01 338.57 L116.67 338.57 L116.67 339.08 L111.15 339.08 L111.15 339.58 L105.63 339.58 L105.63 340.09 L100.30 340.09 L100.30 340.59 L94.78 340.59 L94.78 341.10 L89.44 341.10 L89.44 341.58 L83.92 341.58 L83.92 342.07 L78.94 342.07 L78.94 342.55 L73.42 342.55 L73.42 343.04 L67.91 343.04 L67.91 343.52 L62.57 343.52 L62.57 344.01 L57.05 344.01 L57.05 344.49 L51.71 344.49 L51.71 344.98 L46.20 344.98 L46.20 345.46 L40.68 345.46 L40.68 345.95 L35.34 345.95 L35.34 346.43 L29.82 346.43 L29.82 346.92 L24.48 346.92 L24.48 347.40 L19.00 347.40Z" fill="#873cfa"/>
<path d="M144.00 319.20 L148.88 319.20 L148.88 318.76 L154.40 318.76 L154.40 318.32 L159.73 318.32 L159.73 317.88 L165.25 317.88 L165.25 317.44 L170.59 317.44 L170.59 317.01 L176.11 317.01 L176.11 316.57 L181.62 316.57 L181.62 316.13 L186.96 316.13 L186.96 315.69 L192.48 315.69 L192.48 315.25 L197.82 315.25 L197.82 314.81 L203.33 314.81 L203.33 314.38 L208.85 314.38 L208.85 313.94 L213.83 313.94 L213.83 313.50 L219.35 313.50 L219.35 313.01 L224.69 313.01 L224.69 312.53 L230.21 312.53 L230.21 312.04 L235.55 312.04 L235.55 311.55 L241.06 311.55 L241.06 311.07 L246.58 311.07 L246.58 310.58 L251.92 310.58 L251.92 310.09 L257.43 310.09 L257.43 309.61 L262.77 309.61 L262.77 309.12 L268.29 309.12 L268.29 308.63 L273.81 308.63 L273.81 308.15 L278.97 308.15 L278.97 307.66 L284.48 307.66 L284.48 307.17 L289.82 307.17 L289.82 306.69 L295.34 306.69 L295.34 306.20 L300.68 306.20 L300.68 305.71 L306.20 305.71 L306.20 305.23 L311.71 305.23 L311.71 304.74 L317.05 304.74 L317.05 304.25 L322.57 304.25 L322.57 303.76 L327.91 303.76 L327.91 303.28 L333.42 303.28 L333.42 302.79 L338.94 302.79 L338.94 302.30 L343.92 302.30 L343.92 301.82 L349.44 301.82 L349.44 301.33 L354.78 301.33 L354.78 300.84 L360.30 300.84 L360.30 300.36 L365.63 300.36 L365.63 299.87 L371.15 299.87 L371.15 299.38 L376.67 299.38 L376.67 298.90 L382.01 298.90 L382.01 298.41 L387.52 298.41 L387.52 297.92 L392.86 297.92 L392.86 297.44 L398.38 297.44 L398.38 296.95 L403.90 296.95 L403.90 296.71 L408.88 296.71 L408.88 296.48 L414.40 296.48 L414.40 296.24 L419.73 296.24 L419.73 296.01 L425.25 296.01 L425.25 295.77 L430.59 295.77 L430.59 295.54 L436.11 295.54 L436.11 295.30 L441.62 295.30 L441.62 295.07 L446.96 295.07 L446.96 294.83 L452.48 294.83 L452.48 294.60 L457.82 294.60 L457.82 294.36 L463.33 294.36 L463.33 294.12 L468.85 294.12 L468.85 293.89 L473.83 293.89 L473.83 293.65 L479.35 293.65 L479.35 293.42 L484.69 293.42 L484.69 293.18 L490.21 293.18 L490.21 292.95 L495.55 292.95 L495.55 292.71 L501.06 292.71 L501.06 292.48 L506.58 292.48 L506.58 292.24 L511.92 292.24 L511.92 292.01 L517.43 292.01 L517.43 291.77 L522.77 291.77 L522.77 291.54 L528.90 291.54 L528.90 307.94 L522.77 307.94 L522.77 308.17 L517.43 308.17 L517.43 308.41 L511.92 308.41 L511.92 308.64 L506.58 308.64 L506.58 308.88 L501.06 308.88 L501.06 309.11 L495.55 309.11 L495.55 309.35 L490.21 309.35 L490.21 309.58 L484.69 309.58 L484.69 309.82 L479.35 309.82 L479.35 310.05 L473.83 310.05 L473.83 310.29 L468.85 310.29 L468.85 310.52 L463.33 310.52 L463.33 310.76 L457.82 310.76 L457.82 311.00 L452.48 311.00 L452.48 311.23 L446.96 311.23 L446.96 311.47 L441.62 311.47 L441.62 311.70 L436.11 311.70 L436.11 311.94 L430.59 311.94 L430.59 312.17 L425.25 312.17 L425.25 312.41 L419.73 312.41 L419.73 312.64 L414.40 312.64 L414.40 312.88 L408.88 312.88 L408.88 313.11 L403.90 313.11 L403.90 313.35 L398.38 313.35 L398.38 313.85 L392.86 313.85 L392.86 314.34 L387.52 314.34 L387.52 314.84 L382.01 314.84 L382.01 315.33 L376.67 315.33 L376.67 315.83 L371.15 315.83 L371.15 316.32 L365.63 316.32 L365.63 316.82 L360.30 316.82 L360.30 317.31 L354.78 317.31 L354.78 317.81 L349.44 317.81 L349.44 318.31 L343.92 318.31 L343.92 318.80 L338.94 318.80 L338.94 319.30 L333.42 319.30 L333.42 319.79 L327.91 319.79 L327.91 320.29 L322.57 320.29 L322.57 320.78 L317.05 320.78 L317.05 321.28 L311.71 321.28 L311.71 321.77 L306.20 321.77 L306.20 322.27 L300.68 322.27 L300.68 322.77 L295.34 322.77 L295.34 323.26 L289.82 323.26 L289.82 323.76 L284.48 323.76 L284.48 324.25 L278.97 324.25 L278.97 324.75 L273.81 324.75 L273.81 325.24 L268.29 325.24 L268.29 325.74 L262.77 325.74 L262.77 326.24 L257.43 326.24 L257.43 326.73 L251.92 326.73 L251.92 327.23 L246.58 327.23 L246.58 327.72 L241.06 327.72 L241.06 328.22 L235.55 328.22 L235.55 328.71 L230.21 328.71 L230.21 329.21 L224.69 329.21 L224.69 329.70 L219.35 329.70 L219.35 330.20 L213.83 330.20 L213.83 330.65 L208.85 330.65 L208.85 331.11 L203.33 331.11 L203.33 331.56 L197.82 331.56 L197.82 332.01 L192.48 332.01 L192.48 332.47 L186.96 332.47 L186.96 332.92 L181.62 332.92 L181.62 333.38 L176.11 333.38 L176.11 333.83 L170.59 333.83 L170.59 334.28 L165.25 334.28 L165.25 334.74 L159.73 334.74 L159.73 335.19 L154.40 335.19 L154.40 335.64 L148.88 335.64 L148.88 336.10 L144.00 336.10Z" fill="#b98bfc"/>
<path d="M19.00 346.50 L24.48 346.50 L24.48 346.02 L29.82 346.02 L29.82 345.53 L35.34 345.53 L35.34 345.05 L40.68 345.05 L40.68 344.56 L46.20 344.56 L46.20 344.08 L51.71 344.08 L51.71 343.59 L57.05 343.59 L57.05 343.11 L62.57 343.11 L62.57 342.62 L67.91 342.62 L67.91 342.14 L73.42 342.14 L73.42 341.65 L78.94 341.65 L78.94 341.17 L83.92 341.17 L83.92 340.68 L89.44 340.68 L89.44 340.20 L94.78 340.20 L94.78 339.69 L100.30 339.69 L100.30 339.19 L105.63 339.19 L105.63 338.68 L111.15 338.68 L111.15 338.18 L116.67 338.18 L116.67 337.67 L122.01 337.67 L122.01 337.17 L127.52 337.17 L127.52 336.66 L132.86 336.66 L132.86 336.16 L138.38 336.16 L138.38 335.65 L144.00 335.65 L144.00 342.95 L138.38 342.95 L138.38 343.17 L132.86 343.17 L132.86 343.38 L127.52 343.38 L127.52 343.60 L122.01 343.60 L122.01 343.82 L116.67 343.82 L116.67 344.03 L111.15 344.03 L111.15 344.25 L105.63 344.25 L105.63 344.47 L100.30 344.47 L100.30 344.68 L94.78 344.68 L94.78 344.90 L89.44 344.90 L89.44 345.12 L83.92 345.12 L83.92 345.33 L78.94 345.33 L78.94 345.55 L73.42 345.55 L73.42 345.76 L67.91 345.76 L67.91 345.98 L62.57 345.98 L62.57 346.19 L57.05 346.19 L57.05 346.41 L51.71 346.41 L51.71 346.62 L46.20 346.62 L46.20 346.84 L40.68 346.84 L40.68 347.05 L35.34 347.05 L35.34 347.27 L29.82 347.27 L29.82 347.48 L24.48 347.48 L24.48 347.70 L19.00 347.70Z" fill="#9aacf8"/>
<path d="M144.00 335.20 L148.88 335.20 L148.88 334.74 L154.40 334.74 L154.40 334.29 L159.73 334.29 L159.73 333.84 L165.25 333.84 L165.25 333.38 L170.59 333.38 L170.59 332.93 L176.11 332.93 L176.11 332.48 L181.62 332.48 L181.62 332.02 L186.96 332.02 L186.96 331.57 L192.48 331.57 L192.48 331.11 L197.82 331.11 L197.82 330.66 L203.33 330.66 L203.33 330.21 L208.85 330.21 L208.85 329.75 L213.83 329.75 L213.83 329.30 L219.35 329.30 L219.35 328.80 L224.69 328.80 L224.69 328.31 L230.21 328.31 L230.21 327.81 L235.55 327.81 L235.55 327.32 L241.06 327.32 L241.06 326.82 L246.58 326.82 L246.58 326.33 L251.92 326.33 L251.92 325.83 L257.43 325.83 L257.43 325.34 L262.77 325.34 L262.77 324.84 L268.29 324.84 L268.29 324.34 L273.81 324.34 L273.81 323.85 L278.97 323.85 L278.97 323.35 L284.48 323.35 L284.48 322.86 L289.82 322.86 L289.82 322.36 L295.34 322.36 L295.34 321.87 L300.68 321.87 L300.68 321.37 L306.20 321.37 L306.20 320.88 L311.71 320.88 L311.71 320.38 L317.05 320.38 L317.05 319.88 L322.57 319.88 L322.57 319.39 L327.91 319.39 L327.91 318.89 L333.42 318.89 L333.42 318.40 L338.94 318.40 L338.94 317.90 L343.92 317.90 L343.92 317.41 L349.44 317.41 L349.44 316.91 L354.78 316.91 L354.78 316.41 L360.30 316.41 L360.30 315.92 L365.63 315.92 L365.63 315.42 L371.15 315.42 L371.15 314.93 L376.67 314.93 L376.67 314.43 L382.01 314.43 L382.01 313.94 L387.52 313.94 L387.52 313.44 L392.86 313.44 L392.86 312.95 L398.38 312.95 L398.38 312.45 L403.90 312.45 L403.90 312.21 L408.88 312.21 L408.88 311.98 L414.40 311.98 L414.40 311.74 L419.73 311.74 L419.73 311.51 L425.25 311.51 L425.25 311.27 L430.59 311.27 L430.59 311.04 L436.11 311.04 L436.11 310.80 L441.62 310.80 L441.62 310.57 L446.96 310.57 L446.96 310.33 L452.48 310.33 L452.48 310.10 L457.82 310.10 L457.82 309.86 L463.33 309.86 L463.33 309.62 L468.85 309.62 L468.85 309.39 L473.83 309.39 L473.83 309.15 L479.35 309.15 L479.35 308.92 L484.69 308.92 L484.69 308.68 L490.21 308.68 L490.21 308.45 L495.55 308.45 L495.55 308.21 L501.06 308.21 L501.06 307.98 L506.58 307.98 L506.58 307.74 L511.92 307.74 L511.92 307.51 L517.43 307.51 L517.43 307.27 L522.77 307.27 L522.77 307.04 L528.90 307.04 L528.90 326.42 L522.77 326.42 L522.77 326.64 L517.43 326.64 L517.43 326.86 L511.92 326.86 L511.92 327.07 L506.58 327.07 L506.58 327.29 L501.06 327.29 L501.06 327.51 L495.55 327.51 L495.55 327.73 L490.21 327.73 L490.21 327.95 L484.69 327.95 L484.69 328.17 L479.35 328.17 L479.35 328.39 L473.83 328.39 L473.83 328.61 L468.85 328.61 L468.85 328.82 L463.33 328.82 L463.33 329.04 L457.82 329.04 L457.82 329.26 L452.48 329.26 L452.48 329.48 L446.96 329.48 L446.96 329.70 L441.62 329.70 L441.62 329.92 L436.11 329.92 L436.11 330.14 L430.59 330.14 L430.59 330.36 L425.25 330.36 L425.25 330.57 L419.73 330.57 L419.73 330.79 L414.40 330.79 L414.40 331.01 L408.88 331.01 L408.88 331.23 L403.90 331.23 L403.90 331.45 L398.38 331.45 L398.38 331.68 L392.86 331.68 L392.86 331.92 L387.52 331.92 L387.52 332.15 L382.01 332.15 L382.01 332.39 L376.67 332.39 L376.67 332.62 L371.15 332.62 L371.15 332.85 L365.63 332.85 L365.63 333.09 L360.30 333.09 L360.30 333.32 L354.78 333.32 L354.78 333.55 L349.44 333.55 L349.44 333.79 L343.92 333.79 L343.92 334.02 L338.94 334.02 L338.94 334.26 L333.42 334.26 L333.42 334.49 L327.91 334.49 L327.91 334.72 L322.57 334.72 L322.57 334.96 L317.05 334.96 L317.05 335.19 L311.71 335.19 L311.71 335.43 L306.20 335.43 L306.20 335.66 L300.68 335.66 L300.68 335.89 L295.34 335.89 L295.34 336.13 L289.82 336.13 L289.82 336.36 L284.48 336.36 L284.48 336.59 L278.97 336.59 L278.97 336.83 L273.81 336.83 L273.81 337.06 L268.29 337.06 L268.29 337.30 L262.77 337.30 L262.77 337.53 L257.43 337.53 L257.43 337.76 L251.92 337.76 L251.92 338.00 L246.58 338.00 L246.58 338.23 L241.06 338.23 L241.06 338.46 L235.55 338.46 L235.55 338.70 L230.21 338.70 L230.21 338.93 L224.69 338.93 L224.69 339.17 L219.35 339.17 L219.35 339.40 L213.83 339.40 L213.83 339.65 L208.85 339.65 L208.85 339.91 L203.33 339.91 L203.33 340.16 L197.82 340.16 L197.82 340.41 L192.48 340.41 L192.48 340.67 L186.96 340.67 L186.96 340.92 L181.62 340.92 L181.62 341.18 L176.11 341.18 L176.11 341.43 L170.59 341.43 L170.59 341.68 L165.25 341.68 L165.25 341.94 L159.73 341.94 L159.73 342.19 L154.40 342.19 L154.40 342.44 L148.88 342.44 L148.88 342.70 L144.00 342.70Z" fill="#c0c9fb"/>
<path d="M19.00 346.80 L24.48 346.80 L24.48 346.58 L29.82 346.58 L29.82 346.37 L35.34 346.37 L35.34 346.15 L40.68 346.15 L40.68 345.94 L46.20 345.94 L46.20 345.72 L51.71 345.72 L51.71 345.51 L57.05 345.51 L57.05 345.29 L62.57 345.29 L62.57 345.08 L67.91 345.08 L67.91 344.86 L73.42 344.86 L73.42 344.65 L78.94 344.65 L78.94 344.43 L83.92 344.43 L83.92 344.22 L89.44 344.22 L89.44 344.00 L94.78 344.00 L94.78 343.78 L100.30 343.78 L100.30 343.57 L105.63 343.57 L105.63 343.35 L111.15 343.35 L111.15 343.13 L116.67 343.13 L116.67 342.92 L122.01 342.92 L122.01 342.70 L127.52 342.70 L127.52 342.48 L132.86 342.48 L132.86 342.27 L138.38 342.27 L138.38 342.05 L144.00 342.05 L144.00 349.10 L138.38 349.10 L138.38 349.10 L132.86 349.10 L132.86 349.10 L127.52 349.10 L127.52 349.10 L122.01 349.10 L122.01 349.10 L116.67 349.10 L116.67 349.10 L111.15 349.10 L111.15 349.10 L105.63 349.10 L105.63 349.10 L100.30 349.10 L100.30 349.10 L94.78 349.10 L94.78 349.10 L89.44 349.10 L89.44 349.10 L83.92 349.10 L83.92 349.10 L78.94 349.10 L78.94 349.10 L73.42 349.10 L73.42 349.10 L67.91 349.10 L67.91 349.10 L62.57 349.10 L62.57 349.10 L57.05 349.10 L57.05 349.10 L51.71 349.10 L51.71 349.10 L46.20 349.10 L46.20 349.10 L40.68 349.10 L40.68 349.10 L35.34 349.10 L35.34 349.10 L29.82 349.10 L29.82 349.10 L24.48 349.10 L24.48 349.10 L19.00 349.10Z" fill="#0e8157"/>
<path d="M144.00 341.80 L148.88 341.80 L148.88 341.54 L154.40 341.54 L154.40 341.29 L159.73 341.29 L159.73 341.04 L165.25 341.04 L165.25 340.78 L170.59 340.78 L170.59 340.53 L176.11 340.53 L176.11 340.28 L181.62 340.28 L181.62 340.02 L186.96 340.02 L186.96 339.77 L192.48 339.77 L192.48 339.51 L197.82 339.51 L197.82 339.26 L203.33 339.26 L203.33 339.01 L208.85 339.01 L208.85 338.75 L213.83 338.75 L213.83 338.50 L219.35 338.50 L219.35 338.27 L224.69 338.27 L224.69 338.03 L230.21 338.03 L230.21 337.80 L235.55 337.80 L235.55 337.56 L241.06 337.56 L241.06 337.33 L246.58 337.33 L246.58 337.10 L251.92 337.10 L251.92 336.86 L257.43 336.86 L257.43 336.63 L262.77 336.63 L262.77 336.40 L268.29 336.40 L268.29 336.16 L273.81 336.16 L273.81 335.93 L278.97 335.93 L278.97 335.69 L284.48 335.69 L284.48 335.46 L289.82 335.46 L289.82 335.23 L295.34 335.23 L295.34 334.99 L300.68 334.99 L300.68 334.76 L306.20 334.76 L306.20 334.53 L311.71 334.53 L311.71 334.29 L317.05 334.29 L317.05 334.06 L322.57 334.06 L322.57 333.82 L327.91 333.82 L327.91 333.59 L333.42 333.59 L333.42 333.36 L338.94 333.36 L338.94 333.12 L343.92 333.12 L343.92 332.89 L349.44 332.89 L349.44 332.65 L354.78 332.65 L354.78 332.42 L360.30 332.42 L360.30 332.19 L365.63 332.19 L365.63 331.95 L371.15 331.95 L371.15 331.72 L376.67 331.72 L376.67 331.49 L382.01 331.49 L382.01 331.25 L387.52 331.25 L387.52 331.02 L392.86 331.02 L392.86 330.78 L398.38 330.78 L398.38 330.55 L403.90 330.55 L403.90 330.33 L408.88 330.33 L408.88 330.11 L414.40 330.11 L414.40 329.89 L419.73 329.89 L419.73 329.68 L425.25 329.68 L425.25 329.46 L430.59 329.46 L430.59 329.24 L436.11 329.24 L436.11 329.02 L441.62 329.02 L441.62 328.80 L446.96 328.80 L446.96 328.58 L452.48 328.58 L452.48 328.36 L457.82 328.36 L457.82 328.14 L463.33 328.14 L463.33 327.93 L468.85 327.93 L468.85 327.71 L473.83 327.71 L473.83 327.49 L479.35 327.49 L479.35 327.27 L484.69 327.27 L484.69 327.05 L490.21 327.05 L490.21 326.83 L495.55 326.83 L495.55 326.61 L501.06 326.61 L501.06 326.39 L506.58 326.39 L506.58 326.18 L511.92 326.18 L511.92 325.96 L517.43 325.96 L517.43 325.74 L522.77 325.74 L522.77 325.52 L528.90 325.52 L528.90 349.10 L522.77 349.10 L522.77 349.10 L517.43 349.10 L517.43 349.10 L511.92 349.10 L511.92 349.10 L506.58 349.10 L506.58 349.10 L501.06 349.10 L501.06 349.10 L495.55 349.10 L495.55 349.10 L490.21 349.10 L490.21 349.10 L484.69 349.10 L484.69 349.10 L479.35 349.10 L479.35 349.10 L473.83 349.10 L473.83 349.10 L468.85 349.10 L468.85 349.10 L463.33 349.10 L463.33 349.10 L457.82 349.10 L457.82 349.10 L452.48 349.10 L452.48 349.10 L446.96 349.10 L446.96 349.10 L441.62 349.10 L441.62 349.10 L436.11 349.10 L436.11 349.10 L430.59 349.10 L430.59 349.10 L425.25 349.10 L425.25 349.10 L419.73 349.10 L419.73 349.10 L414.40 349.10 L414.40 349.10 L408.88 349.10 L408.88 349.10 L403.90 349.10 L403.90 349.10 L398.38 349.10 L398.38 349.10 L392.86 349.10 L392.86 349.10 L387.52 349.10 L387.52 349.10 L382.01 349.10 L382.01 349.10 L376.67 349.10 L376.67 349.10 L371.15 349.10 L371.15 349.10 L365.63 349.10 L365.63 349.10 L360.30 349.10 L360.30 349.10 L354.78 349.10 L354.78 349.10 L349.44 349.10 L349.44 349.10 L343.92 349.10 L343.92 349.10 L338.94 349.10 L338.94 349.10 L333.42 349.10 L333.42 349.10 L327.91 349.10 L327.91 349.10 L322.57 349.10 L322.57 349.10 L317.05 349.10 L317.05 349.10 L311.71 349.10 L311.71 349.10 L306.20 349.10 L306.20 349.10 L300.68 349.10 L300.68 349.10 L295.34 349.10 L295.34 349.10 L289.82 349.10 L289.82 349.10 L284.48 349.10 L284.48 349.10 L278.97 349.10 L278.97 349.10 L273.81 349.10 L273.81 349.10 L268.29 349.10 L268.29 349.10 L262.77 349.10 L262.77 349.10 L257.43 349.10 L257.43 349.10 L251.92 349.10 L251.92 349.10 L246.58 349.10 L246.58 349.10 L241.06 349.10 L241.06 349.10 L235.55 349.10 L235.55 349.10 L230.21 349.10 L230.21 349.10 L224.69 349.10 L224.69 349.10 L219.35 349.10 L219.35 349.10 L213.83 349.10 L213.83 349.10 L208.85 349.10 L208.85 349.10 L203.33 349.10 L203.33 349.10 L197.82 349.10 L197.82 349.10 L192.48 349.10 L192.48 349.10 L186.96 349.10 L186.96 349.10 L181.62 349.10 L181.62 349.10 L176.11 349.10 L176.11 349.10 L170.59 349.10 L170.59 349.10 L165.25 349.10 L165.25 349.10 L159.73 349.10 L159.73 349.10 L154.40 349.10 L154.40 349.10 L148.88 349.10 L148.88 349.10 L144.00 349.10Z" fill="#6db59a"/>
<path d="M19.00 348.20 L24.48 348.20 L24.48 348.20 L29.82 348.20 L29.82 348.20 L35.34 348.20 L35.34 348.20 L40.68 348.20 L40.68 348.20 L46.20 348.20 L46.20 348.20 L51.71 348.20 L51.71 348.20 L57.05 348.20 L57.05 348.20 L62.57 348.20 L62.57 348.20 L67.91 348.20 L67.91 348.20 L73.42 348.20 L73.42 348.20 L78.94 348.20 L78.94 348.20 L83.92 348.20 L83.92 348.20 L89.44 348.20 L89.44 348.20 L94.78 348.20 L94.78 348.20 L100.30 348.20 L100.30 348.20 L105.63 348.20 L105.63 348.20 L111.15 348.20 L111.15 348.20 L116.67 348.20 L116.67 348.20 L122.01 348.20 L122.01 348.20 L127.52 348.20 L127.52 348.20 L132.86 348.20 L132.86 348.20 L138.38 348.20 L138.38 348.20 L144.00 348.20 L144.00 360.80 L138.38 360.80 L138.38 360.80 L132.86 360.80 L132.86 360.80 L127.52 360.80 L127.52 360.80 L122.01 360.80 L122.01 360.80 L116.67 360.80 L116.67 360.80 L111.15 360.80 L111.15 360.80 L105.63 360.80 L105.63 360.80 L100.30 360.80 L100.30 360.80 L94.78 360.80 L94.78 360.80 L89.44 360.80 L89.44 360.80 L83.92 360.80 L83.92 360.80 L78.94 360.80 L78.94 360.80 L73.42 360.80 L73.42 360.80 L67.91 360.80 L67.91 360.80 L62.57 360.80 L62.57 360.80 L57.05 360.80 L57.05 360.80 L51.71 360.80 L51.71 360.80 L46.20 360.80 L46.20 360.80 L40.68 360.80 L40.68 360.80 L35.34 360.80 L35.34 360.80 L29.82 360.80 L29.82 360.80 L24.48 360.80 L24.48 360.80 L19.00 360.80Z" fill="#fde0c7"/>
<path d="M144.00 348.20 L148.88 348.20 L148.88 348.20 L154.40 348.20 L154.40 348.20 L159.73 348.20 L159.73 348.20 L165.25 348.20 L165.25 348.20 L170.59 348.20 L170.59 348.20 L176.11 348.20 L176.11 348.20 L181.62 348.20 L181.62 348.20 L186.96 348.20 L186.96 348.20 L192.48 348.20 L192.48 348.20 L197.82 348.20 L197.82 348.20 L203.33 348.20 L203.33 348.20 L208.85 348.20 L208.85 348.20 L213.83 348.20 L213.83 348.20 L219.35 348.20 L219.35 348.20 L224.69 348.20 L224.69 348.20 L230.21 348.20 L230.21 348.20 L235.55 348.20 L235.55 348.20 L241.06 348.20 L241.06 348.20 L246.58 348.20 L246.58 348.20 L251.92 348.20 L251.92 348.20 L257.43 348.20 L257.43 348.20 L262.77 348.20 L262.77 348.20 L268.29 348.20 L268.29 348.20 L273.81 348.20 L273.81 348.20 L278.97 348.20 L278.97 348.20 L284.48 348.20 L284.48 348.20 L289.82 348.20 L289.82 348.20 L295.34 348.20 L295.34 348.20 L300.68 348.20 L300.68 348.20 L306.20 348.20 L306.20 348.20 L311.71 348.20 L311.71 348.20 L317.05 348.20 L317.05 348.20 L322.57 348.20 L322.57 348.20 L327.91 348.20 L327.91 348.20 L333.42 348.20 L333.42 348.20 L338.94 348.20 L338.94 348.20 L343.92 348.20 L343.92 348.20 L349.44 348.20 L349.44 348.20 L354.78 348.20 L354.78 348.20 L360.30 348.20 L360.30 348.20 L365.63 348.20 L365.63 348.20 L371.15 348.20 L371.15 348.20 L376.67 348.20 L376.67 348.20 L382.01 348.20 L382.01 348.20 L387.52 348.20 L387.52 348.20 L392.86 348.20 L392.86 348.20 L398.38 348.20 L398.38 348.20 L403.90 348.20 L403.90 348.20 L408.88 348.20 L408.88 348.20 L414.40 348.20 L414.40 348.20 L419.73 348.20 L419.73 348.20 L425.25 348.20 L425.25 348.20 L430.59 348.20 L430.59 348.20 L436.11 348.20 L436.11 348.20 L441.62 348.20 L441.62 348.20 L446.96 348.20 L446.96 348.20 L452.48 348.20 L452.48 348.20 L457.82 348.20 L457.82 348.20 L463.33 348.20 L463.33 348.20 L468.85 348.20 L468.85 348.20 L473.83 348.20 L473.83 348.20 L479.35 348.20 L479.35 348.20 L484.69 348.20 L484.69 348.20 L490.21 348.20 L490.21 348.20 L495.55 348.20 L495.55 348.20 L501.06 348.20 L501.06 348.20 L506.58 348.20 L506.58 348.20 L511.92 348.20 L511.92 348.20 L517.43 348.20 L517.43 348.20 L522.77 348.20 L522.77 348.20 L528.90 348.20 L528.90 360.80 L522.77 360.80 L522.77 360.80 L517.43 360.80 L517.43 360.80 L511.92 360.80 L511.92 360.80 L506.58 360.80 L506.58 360.80 L501.06 360.80 L501.06 360.80 L495.55 360.80 L495.55 360.80 L490.21 360.80 L490.21 360.80 L484.69 360.80 L484.69 360.80 L479.35 360.80 L479.35 360.80 L473.83 360.80 L473.83 360.80 L468.85 360.80 L468.85 360.80 L463.33 360.80 L463.33 360.80 L457.82 360.80 L457.82 360.80 L452.48 360.80 L452.48 360.80 L446.96 360.80 L446.96 360.80 L441.62 360.80 L441.62 360.80 L436.11 360.80 L436.11 360.80 L430.59 360.80 L430.59 360.80 L425.25 360.80 L425.25 360.80 L419.73 360.80 L419.73 360.80 L414.40 360.80 L414.40 360.80 L408.88 360.80 L408.88 360.80 L403.90 360.80 L403.90 360.80 L398.38 360.80 L398.38 360.80 L392.86 360.80 L392.86 360.80 L387.52 360.80 L387.52 360.80 L382.01 360.80 L382.01 360.80 L376.67 360.80 L376.67 360.80 L371.15 360.80 L371.15 360.80 L365.63 360.80 L365.63 360.80 L360.30 360.80 L360.30 360.80 L354.78 360.80 L354.78 360.80 L349.44 360.80 L349.44 360.80 L343.92 360.80 L343.92 360.80 L338.94 360.80 L338.94 360.80 L333.42 360.80 L333.42 360.80 L327.91 360.80 L327.91 360.80 L322.57 360.80 L322.57 360.80 L317.05 360.80 L317.05 360.80 L311.71 360.80 L311.71 360.80 L306.20 360.80 L306.20 360.80 L300.68 360.80 L300.68 360.80 L295.34 360.80 L295.34 360.80 L289.82 360.80 L289.82 360.80 L284.48 360.80 L284.48 360.80 L278.97 360.80 L278.97 360.80 L273.81 360.80 L273.81 360.80 L268.29 360.80 L268.29 360.80 L262.77 360.80 L262.77 360.80 L257.43 360.80 L257.43 360.80 L251.92 360.80 L251.92 360.80 L246.58 360.80 L246.58 360.80 L241.06 360.80 L241.06 360.80 L235.55 360.80 L235.55 360.80 L230.21 360.80 L230.21 360.80 L224.69 360.80 L224.69 360.80 L219.35 360.80 L219.35 360.80 L213.83 360.80 L213.83 360.80 L208.85 360.80 L208.85 360.80 L203.33 360.80 L203.33 360.80 L197.82 360.80 L197.82 360.80 L192.48 360.80 L192.48 360.80 L186.96 360.80 L186.96 360.80 L181.62 360.80 L181.62 360.80 L176.11 360.80 L176.11 360.80 L170.59 360.80 L170.59 360.80 L165.25 360.80 L165.25 360.80 L159.73 360.80 L159.73 360.80 L154.40 360.80 L154.40 360.80 L148.88 360.80 L148.88 360.80 L144.00 360.80Z" fill="#fdeadc"/>
<g font-family="Liberation Sans, sans-serif">
<text x="14.4" y="55.2" font-size="11.8" font-weight="700" fill="#0b0e1e" stroke="#0b0e1e" stroke-width="0.35" textLength="86.0" lengthAdjust="spacingAndGlyphs">Unlock Schedule</text>
<text x="30.4" y="88.9" font-size="10.2" font-weight="400" fill="#545e76" stroke="#545e76" stroke-width="0.28" textLength="46.4" lengthAdjust="spacingAndGlyphs">StarkWare</text>
<text x="110.0" y="88.9" font-size="10.2" font-weight="400" fill="#545e76" stroke="#545e76" stroke-width="0.28" textLength="41.5" lengthAdjust="spacingAndGlyphs">Investors</text>
<text x="183.0" y="88.9" font-size="10.2" font-weight="400" fill="#545e76" stroke="#545e76" stroke-width="0.28" textLength="82.5" lengthAdjust="spacingAndGlyphs">Early Contributors</text>
<text x="297.5" y="88.9" font-size="10.2" font-weight="400" fill="#545e76" stroke="#545e76" stroke-width="0.28" textLength="45.0" lengthAdjust="spacingAndGlyphs">Donations</text>
<text x="374.5" y="88.9" font-size="10.2" font-weight="400" fill="#545e76" stroke="#545e76" stroke-width="0.28" textLength="92.5" lengthAdjust="spacingAndGlyphs">Foundation Treasury</text>
<text x="500.5" y="88.9" font-size="10.2" font-weight="400" fill="#545e76" stroke="#545e76" stroke-width="0.28" textLength="36.5" lengthAdjust="spacingAndGlyphs">Rebates</text>
<text x="30.4" y="104.9" font-size="10.2" font-weight="400" fill="#545e76" stroke="#545e76" stroke-width="0.28" textLength="85.2" lengthAdjust="spacingAndGlyphs">Strategic Reserves</text>
<text x="148.0" y="104.9" font-size="10.2" font-weight="400" fill="#545e76" stroke="#545e76" stroke-width="0.28" textLength="30.5" lengthAdjust="spacingAndGlyphs">Grants</text>
<text x="211.5" y="104.9" font-size="10.2" font-weight="400" fill="#545e76" stroke="#545e76" stroke-width="0.28" textLength="101.5" lengthAdjust="spacingAndGlyphs">Community Provisions</text>
<text x="429.5" y="60.0" font-size="9.4" font-weight="400" fill="#4b5263" stroke="#4b5263" stroke-width="0.5" textLength="10.0" lengthAdjust="spacingAndGlyphs">7d</text>
<text x="466.5" y="60.0" font-size="9.4" font-weight="400" fill="#4b5263" stroke="#4b5263" stroke-width="0.5" textLength="11.8" lengthAdjust="spacingAndGlyphs">1m</text>
<text x="504.0" y="60.0" font-size="9.4" font-weight="400" fill="#4b5263" stroke="#4b5263" stroke-width="0.5" textLength="9.3" lengthAdjust="spacingAndGlyphs">1y</text>
<text x="538.9" y="59.9" font-size="9.4" font-weight="700" fill="#0f1222" textLength="11.0" lengthAdjust="spacingAndGlyphs">All</text>
<text x="136.0" y="130.1" font-size="8.6" font-weight="700" fill="#1c2233" textLength="23.5" lengthAdjust="spacingAndGlyphs">Today</text>
<text x="539.0" y="138.8" font-size="8.2" font-weight="400" fill="#596170" stroke="#596170" stroke-width="0.28" textLength="20.5" lengthAdjust="spacingAndGlyphs">12.5B</text>
<text x="539.0" y="184.8" font-size="8.2" font-weight="400" fill="#596170" stroke="#596170" stroke-width="0.28" textLength="13.8" lengthAdjust="spacingAndGlyphs">10B</text>
<text x="539.0" y="230.0" font-size="8.2" font-weight="400" fill="#596170" stroke="#596170" stroke-width="0.28" textLength="15.5" lengthAdjust="spacingAndGlyphs">7.5B</text>
<text x="539.0" y="274.8" font-size="8.2" font-weight="400" fill="#596170" stroke="#596170" stroke-width="0.28" textLength="9.6" lengthAdjust="spacingAndGlyphs">5B</text>
<text x="539.0" y="319.8" font-size="8.2" font-weight="400" fill="#596170" stroke="#596170" stroke-width="0.28" textLength="17.0" lengthAdjust="spacingAndGlyphs">2.5B</text>
<text x="539.0" y="364.8" font-size="8.2" font-weight="400" fill="#596170" stroke="#596170" stroke-width="0.28" textLength="4.6" lengthAdjust="spacingAndGlyphs">0</text>
<text x="48.4" y="382.1" font-size="8.9" font-weight="400" fill="#565e6e" stroke="#565e6e" stroke-width="0.5" textLength="47.2" lengthAdjust="spacingAndGlyphs">01 Jan 2025</text>
<text x="113.4" y="382.1" font-size="8.9" font-weight="400" fill="#565e6e" stroke="#565e6e" stroke-width="0.5" textLength="47.2" lengthAdjust="spacingAndGlyphs">01 Jan 2026</text>
<text x="178.4" y="382.1" font-size="8.9" font-weight="400" fill="#565e6e" stroke="#565e6e" stroke-width="0.5" textLength="47.2" lengthAdjust="spacingAndGlyphs">01 Jan 2027</text>
<text x="243.4" y="382.1" font-size="8.9" font-weight="400" fill="#565e6e" stroke="#565e6e" stroke-width="0.5" textLength="47.2" lengthAdjust="spacingAndGlyphs">01 Jan 2028</text>
<text x="308.4" y="382.1" font-size="8.9" font-weight="400" fill="#565e6e" stroke="#565e6e" stroke-width="0.5" textLength="47.2" lengthAdjust="spacingAndGlyphs">01 Jan 2029</text>
<text x="373.4" y="382.1" font-size="8.9" font-weight="400" fill="#565e6e" stroke="#565e6e" stroke-width="0.5" textLength="47.2" lengthAdjust="spacingAndGlyphs">01 Jan 2030</text>
<text x="438.4" y="382.1" font-size="8.9" font-weight="400" fill="#565e6e" stroke="#565e6e" stroke-width="0.5" textLength="47.2" lengthAdjust="spacingAndGlyphs">01 Jan 2031</text>
<text x="503.4" y="382.1" font-size="8.9" font-weight="400" fill="#565e6e" stroke="#565e6e" stroke-width="0.5" textLength="47.2" lengthAdjust="spacingAndGlyphs">01 Jan 2032</text>
</g>
</svg>
<i class="dot" style="left:15.6px;top:81.0px;background:#4a6cf6"></i>
<i class="dot" style="left:95.6px;top:81.0px;background:#1fc28b"></i>
<i class="dot" style="left:168.6px;top:81.0px;background:#f7b37b"></i>
<i class="dot" style="left:283.0px;top:81.0px;background:#f9735f"></i>
<i class="dot" style="left:360.1px;top:81.0px;background:#1fb0ca"></i>
<i class="dot" style="left:485.6px;top:81.0px;background:#873cfa"></i>
<i class="dot" style="left:15.6px;top:97.0px;background:#8fa5f6"></i>
<i class="dot" style="left:134.1px;top:97.0px;background:#0e8157"></i>
<i class="dot" style="left:196.6px;top:97.0px;background:#fcdcc0"></i>
<div id="fab"></div>
</body>
</html>
